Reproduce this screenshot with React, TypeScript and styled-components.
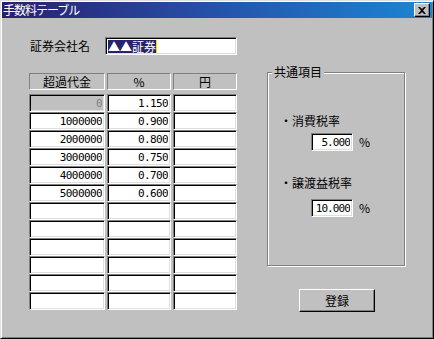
import { ReactElement } from 'react';
import styled, { createGlobalStyle } from 'styled-components';

const GlobalStyle = createGlobalStyle`
    html, body {
        margin: 0;
        padding: 0;
        background: #c0c0c0;
    }
    body {
        font-family: "Noto Sans CJK JP", "Noto Sans", sans-serif;
        font-size: 12px;
        color: #000;
    }
`;

const Window = styled.div`
    width: 434px;
    height: 339px;
    box-sizing: border-box;
    display: flex;
    flex-direction: column;
    background: #c0c0c0;
    border: 1px solid;
    border-color: #dfdfdf #000 #000 #dfdfdf;
    box-shadow: inset 1px 1px #fff, inset -1px -1px #808080;
    padding: 1px;
`;

const TitleBar = styled.div`
    height: 16px;
    flex: 0 0 16px;
    display: flex;
    align-items: center;
    justify-content: space-between;
    padding: 0 2px 0 1px;
    background: linear-gradient(to right, #2a1f6e, #2458b0 55%, #1c86d2);
`;

const TitleText = styled.span`
    color: #fff;
    font-size: 12px;
    line-height: 16px;
    letter-spacing: -1px;
`;

const CloseButton = styled.button`
    width: 16px;
    height: 14px;
    box-sizing: border-box;
    padding: 0;
    margin: 0;
    display: flex;
    align-items: center;
    justify-content: center;
    background: #c0c0c0;
    border: 1px solid;
    border-color: #fff #000 #000 #fff;
    box-shadow: inset -1px -1px #808080;
`;

const Body = styled.div`
    flex: 1 1 auto;
    display: flex;
    padding: 19px 0 0 27px;
`;

const LeftColumn = styled.div`
    display: flex;
    flex-direction: column;
    width: 208px;
`;

const CompanyRow = styled.div`
    display: flex;
    align-items: center;
    height: 18px;
`;

const FieldLabel = styled.span`
    width: 76px;
    padding-left: 1px;
    box-sizing: border-box;
    line-height: 18px;
`;

const sunken = `
    box-sizing: border-box;
    border: 1px solid;
    border-color: #808080 #fff #fff #808080;
    box-shadow: inset 1px 1px #000, inset -1px -1px #dfdfdf;
`;

const NameBox = styled.div`
    ${sunken}
    width: 132px;
    height: 18px;
    display: flex;
    align-items: center;
    padding-left: 2px;
    background: #fff;
`;

const Selected = styled.span`
    background: #28226c;
    color: #fff;
    line-height: 13px;
    height: 13px;
    display: inline-block;
`;

const Caret = styled.span`
    display: inline-block;
    width: 1px;
    height: 13px;
    background: #f0e000;
`;

const Table = styled.div`
    display: grid;
    grid-template-columns: 76px 64px 64px;
    column-gap: 2px;
    margin-top: 18px;
`;

const HeaderCell = styled.div`
    height: 17px;
    box-sizing: border-box;
    margin-bottom: 4px;
    border: 1px solid;
    border-color: #808080 #fff #fff #808080;
    text-align: center;
    line-height: 15px;
`;

const Cell = styled.input<{ $disabled?: boolean }>`
    ${sunken}
    width: 100%;
    height: 18px;
    margin: 0;
    padding: 0 2px 0 2px;
    outline: none;
    text-align: right;
    font-family: "DejaVu Sans Mono", "Liberation Mono", monospace;
    font-size: 11px;
    letter-spacing: -0.6px;
    background: ${(p) => (p.$disabled ? '#c0c0c0' : '#fff')};
    color: ${(p) => (p.$disabled ? '#808080' : '#000')};
`;

const RightColumn = styled.div`
    display: flex;
    flex-direction: column;
    margin-left: 30px;
`;

const GroupBox = styled.div`
    position: relative;
    margin-top: 35px;
    width: 138px;
    height: 194px;
    box-sizing: border-box;
    border: 1px solid #808080;
    box-shadow: 1px 1px 0 #fff, inset 1px 1px 0 #fff;
    padding: 40px 0 0 12px;
`;

const GroupCaption = styled.span`
    position: absolute;
    top: -9px;
    left: 4px;
    padding: 0 2px;
    background: #c0c0c0;
    line-height: 16px;
`;

const TaxLabel = styled.div<{ $gap?: number }>`
    line-height: 16px;
    margin-top: ${(p) => p.$gap ?? 0}px;
`;

const TaxRow = styled.div<{ $gap: number }>`
    display: flex;
    align-items: center;
    margin-top: ${(p) => p.$gap}px;
    padding-left: 31px;
`;

const TaxInput = styled(Cell)`
    width: 42px;
    padding: 0 2px 0 1px;
    letter-spacing: -0.9px;
`;

const Unit = styled.span`
    margin-left: 6px;
    line-height: 18px;
`;

const RegisterButton = styled.button`
    margin: 23px 0 0 32px;
    width: 76px;
    height: 23px;
    box-sizing: border-box;
    padding: 0;
    background: #c0c0c0;
    border: 1px solid;
    border-color: #fff #000 #000 #fff;
    box-shadow: inset -1px -1px #808080;
    font-family: "Noto Sans CJK JP", sans-serif;
    font-size: 12px;
    color: #000;
`;

const rates: [string, string][] = [
    ['0', '1.150'],
    ['1000000', '0.900'],
    ['2000000', '0.800'],
    ['3000000', '0.750'],
    ['4000000', '0.700'],
    ['5000000', '0.600'],
    ['', ''],
    ['', ''],
    ['', ''],
    ['', ''],
    ['', ''],
    ['', ''],
];

const App = (): ReactElement => (
    <Window>
        <GlobalStyle />
        <TitleBar>
            <TitleText>手数料テーブル</TitleText>
            <CloseButton>
                <svg width="8" height="7" viewBox="0 0 8 7">
                    <path d="M0 0h2l2 2 2-2h2L5 3.5 8 7H6L4 5 2 7H0l3-3.5z" fill="#000" />
                </svg>
            </CloseButton>
        </TitleBar>
        <Body>
            <LeftColumn>
                <CompanyRow>
                    <FieldLabel>証券会社名</FieldLabel>
                    <NameBox>
                        <Selected>▲▲証券</Selected>
                        <Caret />
                    </NameBox>
                </CompanyRow>
                <Table>
                    <HeaderCell>超過代金</HeaderCell>
                    <HeaderCell>%</HeaderCell>
                    <HeaderCell>円</HeaderCell>
                    {rates.map(([amount, rate], i) => [
                        <Cell key={`a${i}`} readOnly value={amount} $disabled={i === 0} />,
                        <Cell key={`r${i}`} readOnly value={rate} />,
                        <Cell key={`y${i}`} readOnly value="" />,
                    ])}
                </Table>
            </LeftColumn>
            <RightColumn>
                <GroupBox>
                    <GroupCaption>共通項目</GroupCaption>
                    <TaxLabel>・消費税率</TaxLabel>
                    <TaxRow $gap={4}>
                        <TaxInput readOnly value="5.000" />
                        <Unit>%</Unit>
                    </TaxRow>
                    <TaxLabel $gap={24}>・譲渡益税率</TaxLabel>
                    <TaxRow $gap={8}>
                        <TaxInput readOnly value="10.000" />
                        <Unit>%</Unit>
                    </TaxRow>
                </GroupBox>
                <RegisterButton>登録</RegisterButton>
            </RightColumn>
        </Body>
    </Window>
);

export default App;
